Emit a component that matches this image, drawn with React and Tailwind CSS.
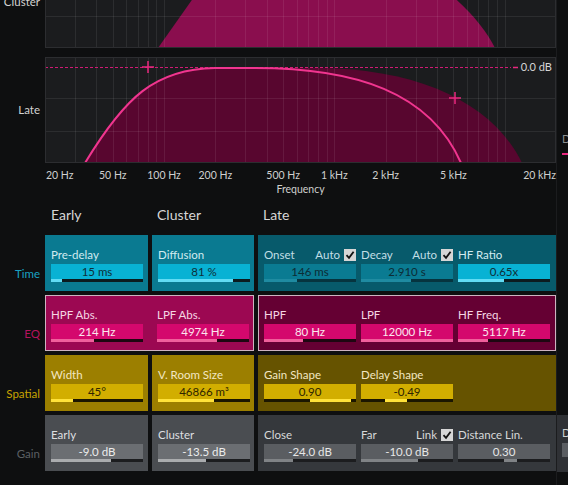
import React from 'react';

const W = 511;
const fx = (f) => (W * Math.log10(f / 20)) / 3;
const ticks = [30, 40, 50, 60, 70, 80, 90, 100, 200, 300, 400, 500, 600, 700, 800, 900, 1000, 2000, 3000, 4000, 5000, 6000, 7000, 8000, 9000, 10000];

const GridLines = ({ h, rows }) => (
    <g stroke="rgba(255,255,255,0.08)" strokeWidth="1">
        {ticks.map((f) => (
            <line key={f} x1={Math.round(fx(f)) + 0.5} x2={Math.round(fx(f)) + 0.5} y1="0" y2={h} />
        ))}
        {rows.map((y) => (
            <line key={y} x1="0" x2={W} y1={y + 0.5} y2={y + 0.5} />
        ))}
    </g>
);

const Plus = ({ x, y }) => (
    <g stroke="#e8287f" strokeWidth="1.5">
        <line x1={x - 6} x2={x + 6} y1={y} y2={y} />
        <line x1={x} x2={x} y1={y - 6} y2={y + 6} />
    </g>
);

const ClusterGraph = () => (
    <svg width={W} height="100" viewBox={`0 0 ${W} 100`} className="block">
        <rect width={W} height="100" fill="#1b1c1e" />
        <path d="M113,100 L180,5 L300,5 C370,5 430,60 450,100 Z" fill="#8a0e4e" />
        <GridLines h={100} rows={[35, 68]} />
        <rect x="0.5" y="0.5" width={W - 1} height="99" fill="none" stroke="#2c2d30" />
    </svg>
);

const LateGraph = () => (
    <svg width={W} height="106" viewBox={`0 0 ${W} 106`} className="block">
        <rect width={W} height="106" fill="#1b1c1e" />
        <path d="M40,106 C80,40 110,12 170,11 L270,11 C380,11 450,50 477,106 Z" fill="#58062f" />
        <GridLines h={106} rows={[41, 74]} />
        <line x1="0" x2="466" y1="10.5" y2="10.5" stroke="#d01a74" strokeDasharray="3 2" shapeRendering="crispEdges" />
        <line x1="468" x2="473" y1="10.5" y2="10.5" stroke="#e8287f" strokeWidth="1.5" />
        <path d="M40,106 C80,40 110,12 170,11 L210,11 C310,11 385,35 416,106" fill="none" stroke="#f0358f" strokeWidth="2" />
        <Plus x={103} y={10} />
        <Plus x={410} y={41} />
        <rect x="0.5" y="0.5" width={W - 1} height="105" fill="none" stroke="#2c2d30" />
    </svg>
);

const Check = () => (
    <span className="w-[12px] h-[12px] bg-[#d6d6d6] flex items-center justify-center">
        <svg width="10" height="10" viewBox="0 0 10 10">
            <path d="M1.5 5.2 L4 7.8 L8.6 1.8" fill="none" stroke="#111" strokeWidth="1.8" />
        </svg>
    </span>
);

const Field = ({ label, extra, value, left = 0, pct, c }) => (
    <div className="w-[92px] flex flex-col">
        <div className={`h-[14px] flex items-center justify-between text-[11.5px] leading-none ${c.label}`}>
            <span>{label}</span>
            {extra && (
                <span className="flex items-center gap-[4px]">
                    {extra}
                    <Check />
                </span>
            )}
        </div>
        <div className={`mt-[2px] h-[15px] flex items-center justify-center text-[11.5px] leading-none ${c.field} ${c.text}`}>
            {value}
        </div>
        <div className={`relative h-[3px] ${c.track}`}>
            <div className={`absolute top-0 h-[3px] ${c.fill}`} style={{ left: `${left}%`, width: `${pct}%` }} />
        </div>
    </div>
);

const time = { label: 'text-[#d2ebf0]', field: 'bg-[#08b2d4]', text: 'text-[#0e2f38]', fill: 'bg-[#62dcf4]', track: 'bg-[#0c1b1f]' };
const timeDim = { label: 'text-[#c2dfe6]', field: 'bg-[#0a7b92]', text: 'text-[#0c2c35]', fill: 'bg-[#1f8ba1]', track: 'bg-[#06343f]' };
const eq = { label: 'text-[#f5d6e3]', field: 'bg-[#d4086d]', text: 'text-[#fbe6ee]', fill: 'bg-[#f0609c]', track: 'bg-[#1e0711]' };
const spatial = { label: 'text-[#f3e7c2]', field: 'bg-[#d2ae00]', text: 'text-[#2e2500]', fill: 'bg-[#ffe23a]', track: 'bg-[#1b1600]' };
const gain = { label: 'text-[#dedfe0]', field: 'bg-[#6b6e72]', text: 'text-[#ececec]', fill: 'bg-[#aaacae]', track: 'bg-[#1c1d1f]' };
const gainDim = { label: 'text-[#d8d9da]', field: 'bg-[#5a5d61]', text: 'text-[#e6e6e6]', fill: 'bg-[#808386]', track: 'bg-[#1c1d1f]' };

const Row = ({ name, color, children }) => (
    <div className="h-[56px] flex">
        <div className={`w-[45px] pr-[5px] pt-[31px] text-right text-[11.5px] leading-[16px] ${color}`}>{name}</div>
        <div className="flex gap-[4px]">{children}</div>
    </div>
);

const Panel = ({ w, bg, border, children }) => (
    <div className={`${w} ${bg} ${border ? 'border border-[#cdb3c0] pl-[5px] pt-[12px]' : 'pl-[6px] pt-[13px]'} h-[56px] flex gap-[5px]`}>
        {children}
    </div>
);

const freqLabels = [
    ['50 Hz', 50], ['100 Hz', 100], ['200 Hz', 200], ['500 Hz', 500],
    ['1 kHz', 1000], ['2 kHz', 2000], ['5 kHz', 5000],
];

export default function App() {
    return (
        <div className="w-[568px] h-[485px] overflow-hidden bg-[#0e0f10] flex font-['Lato',sans-serif] text-[#d2d2d2]">
            <div className="w-[559px] flex flex-col">
                {/* Graphs */}
                <div className="-mt-[52px] h-[100px] flex">
                    <div className="w-[45px] pr-[5px] pt-[47px] text-right text-[11.5px] leading-[14px]">Cluster</div>
                    <ClusterGraph />
                </div>
                <div className="mt-[9px] h-[106px] flex">
                    <div className="w-[45px] pr-[5px] flex items-center justify-end text-[11.5px]">Late</div>
                    <div className="relative">
                        <LateGraph />
                        <span className="absolute right-[4px] top-[3px] text-[11px] leading-[14px] text-[#d6d6d6]">0.0 dB</span>
                    </div>
                </div>
                <div className="ml-[45px] w-[511px] mt-[5px] h-[14px] relative text-[10.5px] leading-[14px] text-[#cfcfcf]">
                    <span className="absolute left-[1px]">20 Hz</span>
                    {freqLabels.map(([t, f]) => (
                        <span key={t} className="absolute -translate-x-1/2 whitespace-nowrap" style={{ left: fx(f) }}>{t}</span>
                    ))}
                    <span className="absolute right-0">20 kHz</span>
                </div>
                <div className="ml-[45px] w-[511px] text-center text-[10.5px] leading-[14px] text-[#cfcfcf]">Frequency</div>

                {/* Column headers */}
                <div className="mt-[10px] h-[18px] flex text-[14px] leading-[18px] text-[#d6d6d6]">
                    <span className="ml-[51px] w-[106px]">Early</span>
                    <span className="w-[106px]">Cluster</span>
                    <span>Late</span>
                </div>

                {/* Parameter grid */}
                <div className="mt-[11px] flex flex-col gap-[4px]">
                    <Row name="Time" color="text-[#19a2c2]">
                        <Panel w="w-[103px]" bg="bg-[#0a7a91]">
                            <Field label="Pre-delay" value="15 ms" pct={12} c={time} />
                        </Panel>
                        <Panel w="w-[102px]" bg="bg-[#0a7a91]">
                            <Field label="Diffusion" value="81 %" pct={81} c={time} />
                        </Panel>
                        <Panel w="w-[298px]" bg="bg-[#075a6b]">
                            <Field label="Onset" extra="Auto" value="146 ms" pct={36} c={timeDim} />
                            <Field label="Decay" extra="Auto" value="2.910 s" pct={54} c={timeDim} />
                            <Field label="HF Ratio" value="0.65x" pct={50} c={time} />
                        </Panel>
                    </Row>
                    <Row name="EQ" color="text-[#b4135e]">
                        <div className="w-[209px] h-[56px] bg-[#9c0852] border border-[#cdb3c0] pl-[5px] pt-[12px] flex gap-[14px]">
                            <Field label="HPF Abs." value="214 Hz" pct={47} c={eq} />
                            <Field label="LPF Abs." value="4974 Hz" pct={65} c={eq} />
                        </div>
                        <Panel w="w-[298px]" bg="bg-[#650033]" border>
                            <Field label="HPF" value="80 Hz" pct={42} c={eq} />
                            <Field label="LPF" value="12000 Hz" pct={100} c={eq} />
                            <Field label="HF Freq." value="5117 Hz" pct={33} c={eq} />
                        </Panel>
                    </Row>
                    <Row name="Spatial" color="text-[#c9a300]">
                        <Panel w="w-[103px]" bg="bg-[#9c7f00]">
                            <Field label="Width" value="45°" pct={24} c={spatial} />
                        </Panel>
                        <Panel w="w-[102px]" bg="bg-[#9c7f00]">
                            <Field label="V. Room Size" value="46866 m³" pct={61} c={spatial} />
                        </Panel>
                        <Panel w="w-[298px]" bg="bg-[#665300]">
                            <Field label="Gain Shape" value="0.90" left={50} pct={45} c={spatial} />
                            <Field label="Delay Shape" value="-0.49" left={26} pct={24} c={spatial} />
                        </Panel>
                    </Row>
                    <Row name="Gain" color="text-[#5c5f63]">
                        <Panel w="w-[103px]" bg="bg-[#4a4d51]">
                            <Field label="Early" value="-9.0 dB" pct={65} c={gain} />
                        </Panel>
                        <Panel w="w-[102px]" bg="bg-[#4a4d51]">
                            <Field label="Cluster" value="-13.5 dB" pct={52} c={gain} />
                        </Panel>
                        <Panel w="w-[298px]" bg="bg-[#35383c]">
                            <Field label="Close" value="-24.0 dB" pct={32} c={gainDim} />
                            <Field label="Far" extra="Link" value="-10.0 dB" pct={62} c={gainDim} />
                            <Field label="Distance Lin." value="0.30" left={50} pct={14} c={gainDim} />
                        </Panel>
                    </Row>
                </div>
            </div>

            {/* Next column, cut off at the window edge */}
            <div className="flex-1 border-l border-[#1b1c1e] flex flex-col">
                <div className="mt-[133px] pl-[5px] text-[11px] leading-[12px] text-[#8a8b8d]">D</div>
                <div className="mt-[8px] ml-[5px] h-[2px] bg-[#e8287f]" />
                <div className="mt-[260px] h-[57px] bg-[#2f3135] pl-[5px] pt-[12px]">
                    <div className="text-[11px] leading-[12px] text-[#cfcfcf]">D</div>
                    <div className="mt-[4px] h-[14px] bg-[#5a5d61]" />
                </div>
            </div>
        </div>
    );
}
